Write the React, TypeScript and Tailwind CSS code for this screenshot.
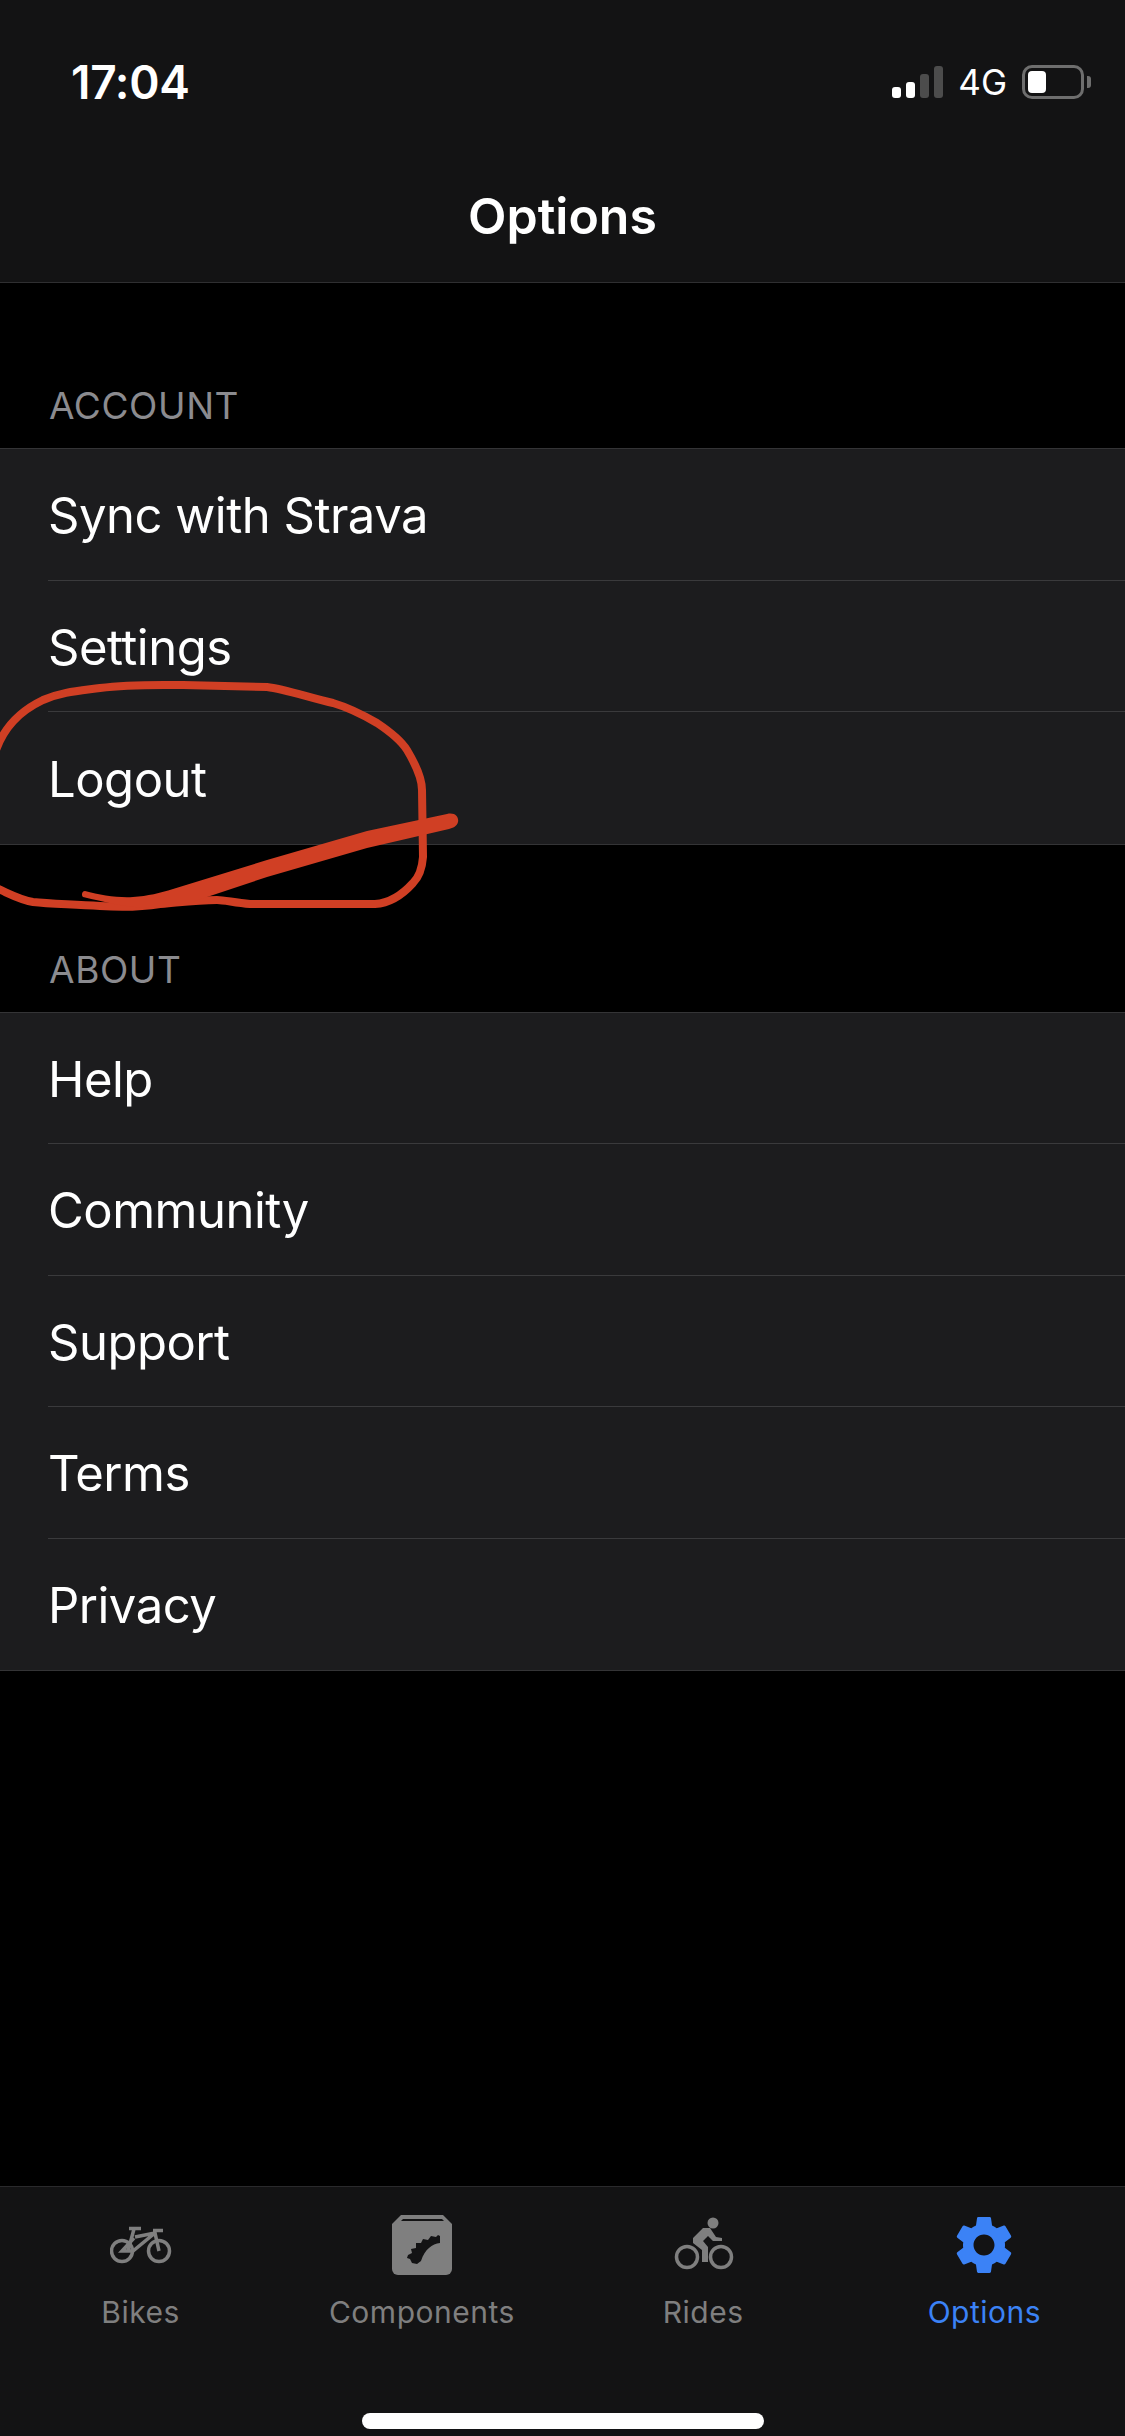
import { MdSettings } from "react-icons/md";

const account = ["Sync with Strava", "Settings", "Logout"];
const about = ["Help", "Community", "Support", "Terms", "Privacy"];

function Group({ label, items }: { label: string; items: string[] }) {
  return (
    <section>
      <h2 className="h-[66px] pt-[2px] pl-[49px] text-[37px] leading-[44px] font-normal tracking-[0.6px] text-[#8b8b8f]">
        {label}
      </h2>
      <ul className="border-y border-[#343436] bg-[#1c1c1e]">
        {items.map((item, i) => (
          <li key={item} className="pl-[48px]">
            <div
              className={
                "flex h-[131.5px] items-center pt-[3px] text-[49px] tracking-[-0.5px] text-white " +
                (i < items.length - 1 ? "border-b border-[#3a3a3c]" : "")
              }
            >
              {item}
            </div>
          </li>
        ))}
      </ul>
    </section>
  );
}

function BikeIcon() {
  return (
    <svg width="62" height="40" viewBox="110 2224 62 40" fill="none" stroke="#7f7f7f" strokeWidth="3.5">
      <circle cx="122" cy="2250" r="10.5" />
      <circle cx="159" cy="2250" r="10.5" />
      <path d="M129 2227.5h12M134 2228l-6 22h5l22-18 4 18M135 2236l20-4M134 2237l-12 13h11M153 2229.5h10" />
    </svg>
  );
}

function ComponentsIcon() {
  return (
    <svg width="60" height="60" viewBox="393 2214 60 60">
      <path
        d="M402 2214h42l9 9v45a6 6 0 0 1-6 6h-48a6 6 0 0 1-6-6v-45z"
        fill="#7f7f7f"
      />
      <path d="M402 2220l2-2h39l2 2z" fill="#131314" />
      <path
        d="M409 2254l4-2-1-4 5-1 0-5 5 0 2-4 5 1 3-4 5 1 2-2 2 1 0 7c-8 1-15 6-19 18l-4 3-5-1-2-4-3-1z"
        fill="#131314"
      />
    </svg>
  );
}

function RidesIcon() {
  return (
    <svg width="62" height="58" viewBox="671 2216 62 58" fill="none" stroke="#7f7f7f">
      <circle cx="686" cy="2257" r="10.5" strokeWidth="3.5" />
      <circle cx="720" cy="2257" r="10.5" strokeWidth="3.5" />
      <circle cx="712" cy="2223" r="5.5" fill="#7f7f7f" stroke="none" />
      <path
        d="M692 2238l10-10h7l6 9 6 1v3l-9 0-5-5-5 5 5 6v15h-6v-12l-9-7z"
        fill="#7f7f7f"
        stroke="none"
      />
    </svg>
  );
}

function TabItem({ icon, label, active }: { icon: React.ReactNode; label: string; active?: boolean }) {
  return (
    <div className="flex flex-col items-center">
      <div className="flex h-[70px] items-center justify-center">{icon}</div>
      <span
        className={
          "mt-[14px] text-[30px] leading-[36px] tracking-[0.5px] " +
          (active ? "text-[#3b82f6]" : "text-[#7f7f7f]")
        }
      >
        {label}
      </span>
    </div>
  );
}

export default function App() {
  return (
    <div className="relative flex h-[2436px] w-[1125px] flex-col overflow-hidden bg-black font-['Inter','Liberation_Sans',sans-serif]">
      <header className="h-[283px] shrink-0 border-b border-[#2f2f31] bg-[#131314]">
        <div className="flex items-center justify-between pt-[58px] pr-[34px] pl-[71px]">
          <span className="text-[46px] leading-[48px] font-semibold tracking-[-0.3px] text-white">17:04</span>
          <div className="flex items-center">
            <div className="flex items-end gap-[5px]">
              <span className="h-[11px] w-[9px] rounded-[3px] bg-white" />
              <span className="h-[16px] w-[9px] rounded-[3px] bg-white" />
              <span className="h-[24px] w-[9px] rounded-[3px] bg-[#4c4c4c]" />
              <span className="h-[32px] w-[9px] rounded-[3px] bg-[#4c4c4c]" />
            </div>
            <span className="ml-[15px] text-[35px] leading-[40px] text-white">4G</span>
            <div className="ml-[15px] flex h-[34px] w-[62px] items-center rounded-[10px] border-[3px] border-[#6e6e6e] pl-[3px]">
              <span className="h-[22px] w-[18px] rounded-[4px] bg-white" />
            </div>
            <span className="ml-[3px] h-[12px] w-[4px] rounded-r-[3px] bg-[#6e6e6e]" />
          </div>
        </div>
        <h1 className="mt-[80px] text-center text-[50px] leading-[60px] font-semibold text-white">
          Options
        </h1>
      </header>

      <main className="flex-1 pt-[99px]">
        <Group label="ACCOUNT" items={account} />
        <div className="h-[101px]" />
        <Group label="ABOUT" items={about} />
      </main>

      <footer className="relative h-[250px] shrink-0 border-t border-[#2a2a2c] bg-[#131314]">
        <div className="grid grid-cols-4 pt-[23px]">
          <TabItem icon={<BikeIcon />} label="Bikes" />
          <TabItem icon={<ComponentsIcon />} label="Components" />
          <TabItem icon={<RidesIcon />} label="Rides" />
          <TabItem icon={<MdSettings size={70} className="text-[#3b82f6]" />} label="Options" active />
        </div>
        <div className="absolute bottom-[7px] left-[362px] h-[16px] w-[402px] rounded-full bg-white" />
      </footer>

      {/* red pen scribble drawn over the screenshot */}
      <svg className="absolute top-0 left-0" width="1125" height="2436" viewBox="0 0 1125 2436" fill="none">
        <path
          d="M-4 750C4 728 18 712 43 700C62 692 78 691 100 688C130 684 160 685 183 685L267 687C285 689 310 698 333 703C350 708 365 716 377 723C392 733 402 742 407 750C416 765 422 778 422 790L423 857C422 870 418 878 413 883C404 893 392 903 375 904L250 904C235 903 225 900 217 900C195 900 175 903 160 904C135 908 115 907 100 906C70 904 50 904 33 902C20 900 8 893 -4 888"
          stroke="#d03f24"
          strokeWidth="8"
          strokeLinecap="round"
        />
        <path
          d="M85 891C100 895 118 898 133 897C148 896 160 893 173 889L267 860L367 831L447 814C456 812 459 818 458 822C457 826 453 828 449 829L367 848L267 877L207 897C190 903 170 908 150 908C128 908 105 902 83 897C81 895 82 891 85 891Z"
          fill="#d03f24"
        />
      </svg>
    </div>
  );
}
